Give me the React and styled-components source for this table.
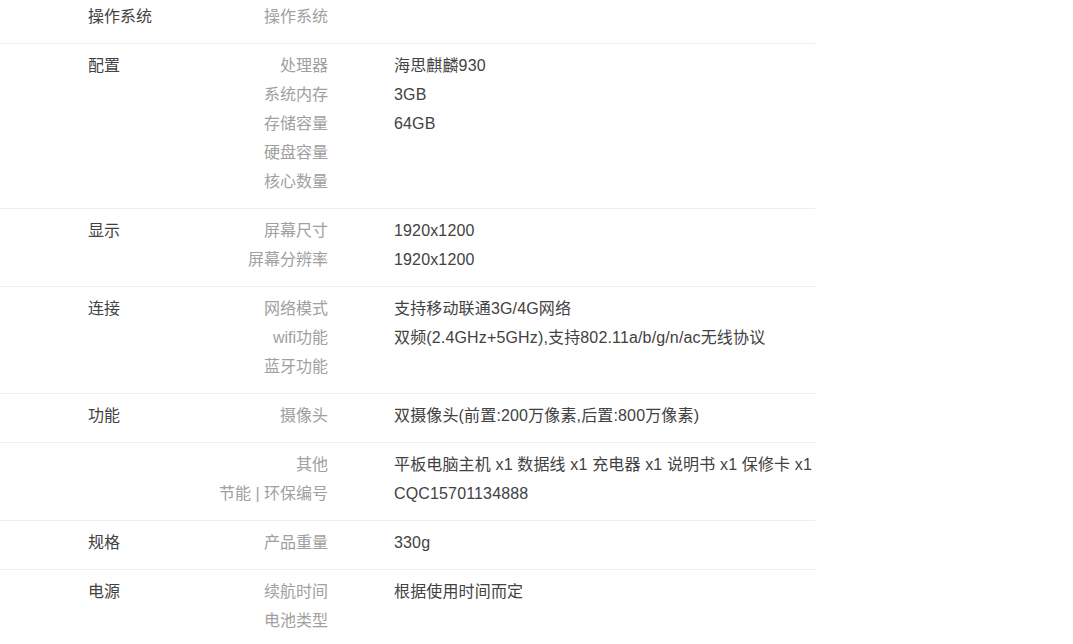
import styled, { createGlobalStyle } from "styled-components";

const GlobalStyle = createGlobalStyle`
  html, body {
    margin: 0;
    padding: 0;
    background: #fff;
  }
  body {
    font-family: "Liberation Sans", Arial, "Noto Sans CJK SC", sans-serif;
    font-size: 16px;
    color: #424242;
    overflow: hidden;
  }
`;

const specs = [
  { title: "操作系统", rows: [["操作系统", ""]] },
  {
    title: "配置",
    rows: [
      ["处理器", "海思麒麟930"],
      ["系统内存", "3GB"],
      ["存储容量", "64GB"],
      ["硬盘容量", ""],
      ["核心数量", ""],
    ],
  },
  {
    title: "显示",
    rows: [
      ["屏幕尺寸", "1920x1200"],
      ["屏幕分辨率", "1920x1200"],
    ],
  },
  {
    title: "连接",
    rows: [
      ["网络模式", "支持移动联通3G/4G网络"],
      ["wifi功能", "双频(2.4GHz+5GHz),支持802.11a/b/g/n/ac无线协议"],
      ["蓝牙功能", ""],
    ],
  },
  { title: "功能", rows: [["摄像头", "双摄像头(前置:200万像素,后置:800万像素)"]] },
  {
    title: "",
    rows: [
      ["其他", "平板电脑主机 x1 数据线 x1 充电器 x1 说明书 x1 保修卡 x1"],
      ["节能 | 环保编号", "CQC15701134888"],
    ],
  },
  { title: "规格", rows: [["产品重量", "330g"]] },
  {
    title: "电源",
    rows: [
      ["续航时间", "根据使用时间而定"],
      ["电池类型", ""],
    ],
  },
];

const Table = styled.div`
  width: 815px;
  margin-top: -5px;
`;

const Section = styled.div`
  display: flex;
  padding: 7px 0 12px 88px;
  border-bottom: 1px solid #eee;

  &:last-child {
    border-bottom: none;
  }
`;

const Title = styled.div`
  width: 100px;
  height: 29px;
  line-height: 29px;
  flex-shrink: 0;
  color: #424242;
`;

const List = styled.div`
  flex: 1;
  display: flex;
  flex-direction: column;
`;

const Row = styled.div`
  display: grid;
  grid-template-columns: 140px 1fr;
  column-gap: 66px;
  height: 29px;
  line-height: 29px;
`;

const Label = styled.div`
  text-align: right;
  color: #a0a0a0;
  white-space: nowrap;
`;

const Value = styled.div`
  color: #424242;
  letter-spacing: 0.15px;
  white-space: nowrap;
`;

const App = () => {
  return (
    <>
      <GlobalStyle />
      <Table>
        {specs.map((section, i) => (
          <Section key={i}>
            <Title>{section.title}</Title>
            <List>
              {section.rows.map(([label, value]) => (
                <Row key={label}>
                  <Label>{label}</Label>
                  <Value>{value}</Value>
                </Row>
              ))}
            </List>
          </Section>
        ))}
      </Table>
    </>
  );
};

export default App;
